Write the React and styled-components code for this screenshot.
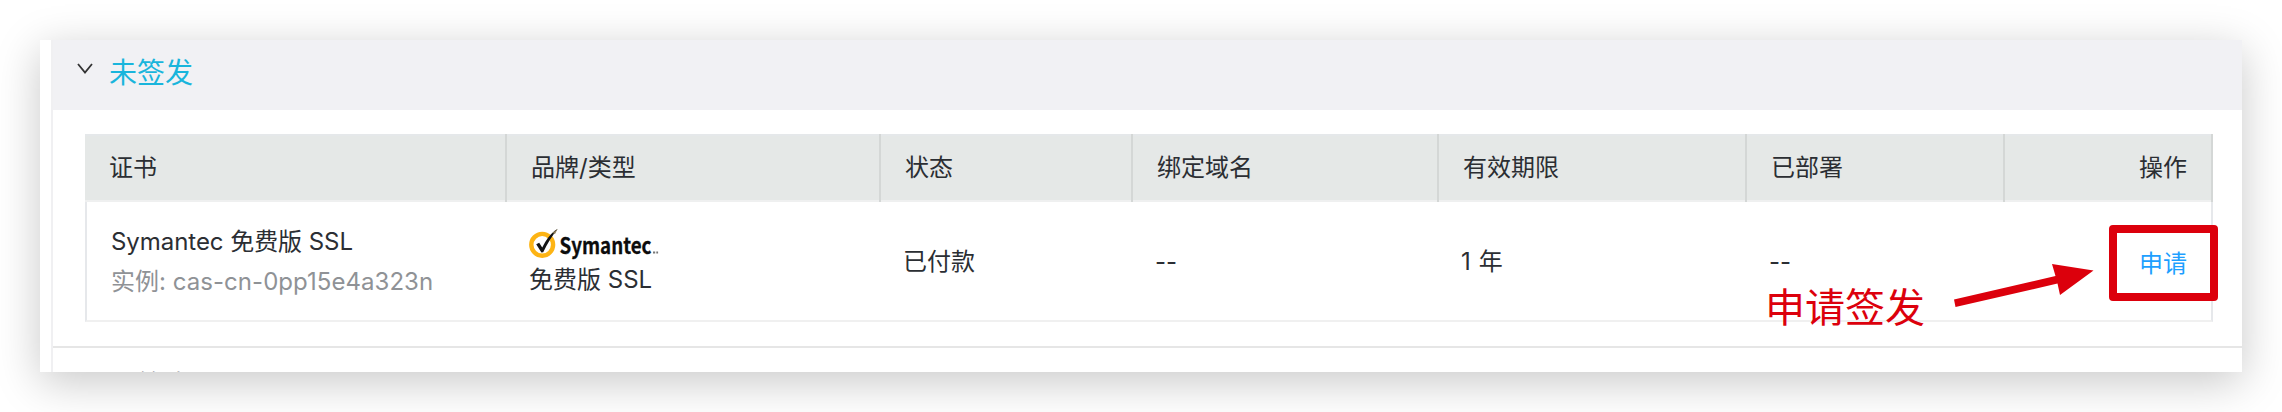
import React from "react";
import styled, { createGlobalStyle } from "styled-components";

const GlobalStyle = createGlobalStyle`
  * { box-sizing: border-box; }
  body {
    margin: 0;
    background: #fff;
    color: #2b2e33;
    font: 24px/36px Inter, "Noto Sans CJK SC", sans-serif;
  }
`;

const Page = styled.main`
  height: 412px;
  padding: 40px;
  overflow: hidden;
`;

const Panel = styled.div`
  position: relative;
  height: 332px;
  padding-left: 11px;
  background: #fff;
  box-shadow: 0 10px 42px rgba(0, 0, 0, 0.22);
`;

const Sections = styled.div`
  height: 332px;
  overflow: hidden;
  border-left: 2px solid #f0f0f2;
`;

const SectionHeader = styled.header`
  display: flex;
  align-items: center;
  gap: 16px;
  height: ${(p) => (p.$open ? 70 : 80)}px;
  margin-left: ${(p) => (p.$open ? -2 : 0)}px;
  padding: 0 0 4px ${(p) => (p.$open ? 26 : 24)}px;
  background: ${(p) => (p.$open ? "#f1f1f4" : "#fff")};
  color: ${(p) => (p.$open ? "#19b5dc" : "#2b2e33")};
  font-size: 28px;
  line-height: 40px;
`;

const Chevron = styled.svg`
  width: 16px;
  height: 12px;
  margin-bottom: 8px;
  fill: none;
  stroke: #333;
  stroke-width: 1.8;
`;

const SectionBody = styled.div`
  height: 238px;
  padding: 24px 29px 24px 32px;
  border-bottom: 2px solid #e6e6e6;
`;

const Table = styled.div`
  width: 2128px;
`;

const columns = "422px 374px 252px 306px 308px 258px 208px";

const HeadRow = styled.div`
  display: grid;
  grid-template-columns: ${columns};
  height: 68px;
  background: #e5e8e7;
  box-shadow: inset 0 2px #e5e8ea, inset 0 -2px #eff0f0;
`;

const HeadCell = styled.div`
  display: flex;
  align-items: center;
  justify-content: ${(p) => (p.$end ? "flex-end" : "flex-start")};
  padding: 0 24px;
  border-right: 2px solid #d4d7d6;
`;

const Row = styled.div`
  display: grid;
  grid-template-columns: ${columns};
  height: 120px;
  border: solid #e6e8eb;
  border-width: 0 2px 2px;
  border-bottom-color: #f0f0f0;
`;

const Cell = styled.div`
  display: flex;
  flex-direction: column;
  justify-content: center;
  align-items: flex-start;
  padding: ${(p) => p.$drop ?? 2}px 0 0 ${(p) => p.$indent ?? 20}px;
`;

const ActionCell = styled(Cell)`
  align-items: flex-end;
  padding: 5px 28px 0 0;
`;

const Line = styled.div`
  line-height: 40px;
  white-space: nowrap;
  letter-spacing: ${(p) => p.$spacing ?? 0}px;
  color: ${(p) => (p.$muted ? "#8f9296" : "inherit")};
`;

const Product = styled(Line)`
  margin-top: 4px;
  line-height: 32px;
`;

const Action = styled.a`
  color: #1e9fff;
`;

const Logo = styled.svg`
  display: block;
  width: 132px;
  height: 34px;
  overflow: visible;
`;

const Highlight = styled.div`
  position: absolute;
  left: 2069px;
  top: 185px;
  width: 109px;
  height: 76px;
  border: 8px solid #dc000c;
  border-radius: 4px;
`;

const Note = styled.div`
  position: absolute;
  left: 1725px;
  top: 238px;
  color: #dc000c;
  font-size: 40px;
  line-height: 60px;
`;

const Arrow = styled.svg`
  position: absolute;
  left: 1910px;
  top: 220px;
  width: 150px;
  height: 50px;
  fill: #dc000c;
`;

function SymantecLogo() {
  return (
    <Logo viewBox="0 0 132 34">
      <circle cx="13.2" cy="18.8" r="10.9" fill="none" stroke="#fdb414" strokeWidth="4.4" />
      <path d="M7.2 18.3 10.2 16.8 13.2 21.6Q18.5 10.5 26 4.5L28.6 3Q20.5 13 14.2 26.3L12.4 26.6Z" fill="#141414" />
      <path d="M23.5 7 28.6 2.8 26 8Z" fill="#8a7a55" />
      <text x="30.5" y="27.5" fontSize="22" fontWeight="700" fontFamily="'Noto Sans CJK SC', sans-serif" textLength="92" lengthAdjust="spacingAndGlyphs" fill="#0c0c0c" stroke="#0c0c0c" strokeWidth="0.3">Symantec</text>
      <path d="M124 26.5h2.2M127.3 26.5h1.8" stroke="#777" strokeWidth="1.8" />
    </Logo>
  );
}

export default function App() {
  return (
    <>
      <GlobalStyle />
      <Page>
        <Panel>
          <Sections>
            <SectionHeader $open>
              <Chevron viewBox="0 0 16 12"><path d="M1 1 8 9.5 15 1" /></Chevron>
              <span>未签发</span>
            </SectionHeader>
            <SectionBody>
              <Table>
                <HeadRow>
                  <HeadCell>证书</HeadCell>
                  <HeadCell>品牌/类型</HeadCell>
                  <HeadCell>状态</HeadCell>
                  <HeadCell>绑定域名</HeadCell>
                  <HeadCell>有效期限</HeadCell>
                  <HeadCell>已部署</HeadCell>
                  <HeadCell $end>操作</HeadCell>
                </HeadRow>
                <Row>
                  <Cell $indent={24} $drop={2}>
                    <Line $spacing={-0.05}>Symantec 免费版 SSL</Line>
                    <Line $muted $spacing={0.04}>实例: cas-cn-0pp15e4a323n</Line>
                  </Cell>
                  <Cell $drop={0}>
                    <SymantecLogo />
                    <Product>免费版 SSL</Product>
                  </Cell>
                  <Cell><Line>已付款</Line></Cell>
                  <Cell><Line>--</Line></Cell>
                  <Cell><Line $spacing={0.6}>1 年</Line></Cell>
                  <Cell><Line>--</Line></Cell>
                  <ActionCell><Action>申请</Action></ActionCell>
                </Row>
              </Table>
            </SectionBody>
            <SectionHeader>
              <Chevron viewBox="0 0 16 12"><path d="M1 1 8 9.5 15 1" /></Chevron>
              <span>已签发</span>
            </SectionHeader>
          </Sections>
          <Note>申请签发</Note>
          <Arrow viewBox="1950 260 150 50">
            <path d="M1954 299.5 2055.5 276 2052 264 2093.5 270.5 2060 295 2057.5 283.5 1955.5 307Z" />
          </Arrow>
          <Highlight />
        </Panel>
      </Page>
    </>
  );
}
